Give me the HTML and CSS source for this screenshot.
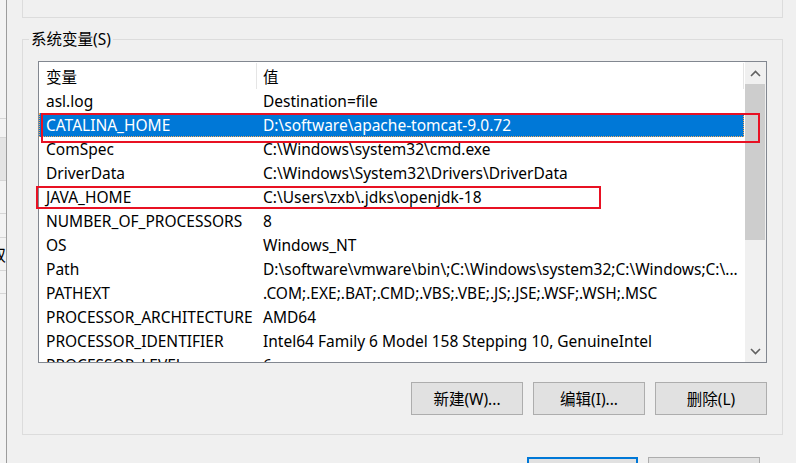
FILE: index.html
```html
<!DOCTYPE html>
<html lang="zh-CN">
<head>
<meta charset="utf-8">
<title>系统变量</title>
<link rel="stylesheet" href="styles.css">
</head>
<body>
<div class="app">
  <div class="bgwin">
    <div class="seg s1"></div>
    <div class="seg s2"></div>
    <div class="seg s3"></div>
    <div class="seg s4"></div>
    <div class="seg s5"></div>
    <div class="seg s6"><span class="frag">双</span></div>
    <div class="seg s7"></div>
    <div class="seg s8"></div>
  </div>
  <div class="dialog">
    <div class="prev-group"></div>
    <fieldset class="group">
      <legend>系统变量(S)</legend>
      <div class="group-body">
        <div class="listbox">
          <div class="list">
            <div class="hdr"><div class="hc c1">变量</div><div class="hc c2">值</div></div>
            <div class="row"><span class="c1">asl.log</span><span class="c2">Destination=file</span></div>
            <div class="row sel"><span class="c1">CATALINA_HOME</span><span class="c2">D:\software\apache-tomcat-9.0.72</span></div>
            <div class="row"><span class="c1">ComSpec</span><span class="c2">C:\Windows\system32\cmd.exe</span></div>
            <div class="row"><span class="c1">DriverData</span><span class="c2">C:\Windows\System32\Drivers\DriverData</span></div>
            <div class="row"><span class="c1">JAVA_HOME</span><span class="c2">C:\Users\zxb\.jdks\openjdk-18</span></div>
            <div class="row"><span class="c1">NUMBER_OF_PROCESSORS</span><span class="c2">8</span></div>
            <div class="row"><span class="c1">OS</span><span class="c2">Windows_NT</span></div>
            <div class="row"><span class="c1">Path</span><span class="c2">D:\software\vmware\bin\;C:\Windows\system32;C:\Windows;C:\...</span></div>
            <div class="row"><span class="c1">PATHEXT</span><span class="c2">.COM;.EXE;.BAT;.CMD;.VBS;.VBE;.JS;.JSE;.WSF;.WSH;.MSC</span></div>
            <div class="row"><span class="c1">PROCESSOR_ARCHITECTURE</span><span class="c2">AMD64</span></div>
            <div class="row"><span class="c1">PROCESSOR_IDENTIFIER</span><span class="c2">Intel64 Family 6 Model 158 Stepping 10, GenuineIntel</span></div>
            <div class="row"><span class="c1">PROCESSOR_LEVEL</span><span class="c2">6</span></div>
          </div>
          <div class="vscroll">
            <div class="sb-btn"><svg width="11" height="7" viewBox="0 0 11 7"><polyline points="1,6 5.5,1.5 10,6" fill="none" stroke="#606060" stroke-width="1.6"/></svg></div>
            <div class="thumb"></div>
            <div class="track"></div>
            <div class="sb-btn"><svg width="11" height="7" viewBox="0 0 11 7"><polyline points="1,1 5.5,5.5 10,1" fill="none" stroke="#606060" stroke-width="1.6"/></svg></div>
          </div>
        </div>
        <div class="btns">
          <button class="btn">新建(W)...</button>
          <button class="btn">编辑(I)...</button>
          <button class="btn">删除(L)</button>
        </div>
      </div>
    </fieldset>
    <div class="dlg-btns">
      <button class="btn primary">确定</button>
      <button class="btn second">取消</button>
    </div>
  </div>
</div>
<div class="mark mark1"></div>
<div class="mark mark2"></div>
</body>
</html>
```

FILE: styles.css
```css
html, body {
  margin: 0;
  padding: 0;
}
body {
  width: 796px;
  height: 463px;
  overflow: hidden;
  background: #f0f0f0;
  color: #000;
  font-family: "Noto Sans", "Noto Sans CJK SC", sans-serif;
  font-size: 15.5px;
}
.app {
  display: flex;
  height: 463px;
}

/* window fragment behind on the left */
.bgwin {
  flex: none;
  width: 6px;
  border-right: 1px solid #9c9c9c;
  display: flex;
  flex-direction: column;
  overflow: hidden;
  background: #f3f3f3;
}
.seg {
  flex: none;
  border-bottom: 1px solid #d6d6d6;
  overflow: hidden;
}
.s1 { height: 118px; }
.s2 { height: 18px; }
.s3 { height: 42px; background: #e4e4e4; }
.s4 { height: 32px; }
.s5 { height: 23px; }
.s6 { height: 32px; }
.s7 { height: 22px; }
.s8 { flex: 1; border-bottom: 0; }
.frag {
  display: block;
  margin: 8px 0 0 -10px;
  font-size: 16px;
  line-height: 16px;
  font-family: "Noto Sans CJK SC", sans-serif;
}

.dialog {
  flex: none;
  width: 761px;
  padding-left: 15px;
}
.prev-group {
  height: 17px;
  border: 1px solid #dcdcdc;
  border-top: 0;
}
.group {
  margin: 11px 0 0;
  padding: 0;
  border: 1px solid #dcdcdc;
  min-width: 0;
}
.group legend {
  margin-left: 6px;
  padding: 0 2px;
  line-height: 20px;
}
.group-body {
  padding: 12px 15px 19px;
}

.listbox {
  display: flex;
  height: 302px;
  box-sizing: border-box;
  border: 1px solid #828790;
  background: #fff;
  overflow: hidden;
}
.list {
  flex: 1;
  min-width: 0;
  overflow: hidden;
}
.hdr {
  display: flex;
  height: 27px;
}
.hc {
  box-sizing: border-box;
  margin-top: 1px;
  height: 26px;
  line-height: 28px;
  border-right: 1px solid #e5e5e5;
  white-space: nowrap;
}
.hdr .c1 { width: 218px; padding-left: 7px; }
.hdr .c2 { width: 487px; padding-left: 6px; }

.row {
  display: flex;
  height: 24px;
  line-height: 24px;
  margin-right: 1px;
  white-space: nowrap;
  box-sizing: border-box;
}
.row .c1 {
  flex: none;
  box-sizing: border-box;
  width: 218px;
  padding-left: 7px;
}
.row .c2 {
  flex: 1;
  min-width: 0;
  padding-left: 6px;
  overflow: hidden;
}
.row.sel {
  background: #0078d7;
  color: #fff;
  outline: 1px dotted #f6a95a;
  outline-offset: -1px;
}

.vscroll {
  flex: none;
  width: 21px;
  display: flex;
  flex-direction: column;
  background: #f0f0f0;
}
.sb-btn {
  height: 22px;
  display: flex;
  align-items: center;
  justify-content: center;
}
.thumb {
  height: 156px;
  margin-right: 1px;
  background: #cdcdcd;
}
.track { flex: 1; }

.btns {
  display: flex;
  justify-content: flex-end;
  gap: 10px;
  margin-top: 19px;
}
.btn {
  box-sizing: border-box;
  width: 112px;
  height: 33px;
  margin: 0;
  padding: 0;
  background: #e1e1e1;
  border: 1px solid #adadad;
  color: #000;
  font: inherit;
}
.dlg-btns {
  display: flex;
  justify-content: flex-end;
  gap: 10px;
  margin-top: 22px;
  padding-right: 23px;
}
.btn.primary {
  width: 111px;
  border: 2px solid #0078d7;
}

/* red annotation boxes drawn over the screenshot */
.mark {
  position: absolute;
  box-sizing: border-box;
  border: 2px solid #e81123;
}
.mark1 { left: 41px; top: 113px; width: 719px; height: 30px; }
.mark2 { left: 36px; top: 186px; width: 565px; height: 23px; }
```
